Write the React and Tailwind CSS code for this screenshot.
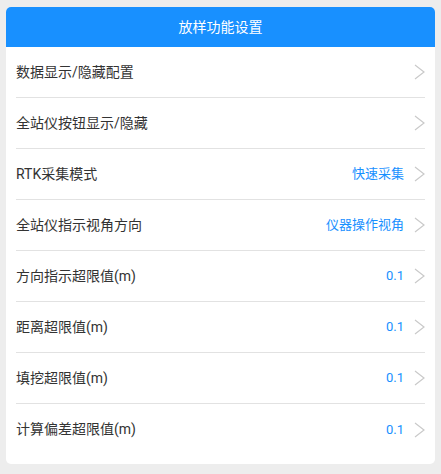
import React from "react";

const rows = [
  { label: "数据显示/隐藏配置" },
  { label: "全站仪按钮显示/隐藏" },
  { label: "RTK采集模式", value: "快速采集" },
  { label: "全站仪指示视角方向", value: "仪器操作视角" },
  { label: "方向指示超限值(m)", value: "0.1" },
  { label: "距离超限值(m)", value: "0.1" },
  { label: "填挖超限值(m)", value: "0.1" },
  { label: "计算偏差超限值(m)", value: "0.1" },
];

function Chevron() {
  return (
    <svg width="11" height="16" viewBox="0 0 11 16" className="shrink-0">
      <polyline points="1,1 10,8 1,15" fill="none" stroke="#cacaca" strokeWidth="1.2" />
    </svg>
  );
}

export default function App() {
  return (
    <div
      className="w-[441px] h-[474px] bg-[#ededed] pt-[7px] px-[6px]"
      style={{ fontFamily: 'Roboto, "Noto Sans CJK SC", sans-serif' }}
    >
      <div className="bg-white rounded-[5px] overflow-hidden pb-[9px]">
        <div className="h-[40px] bg-[#1890ff] flex items-center justify-center text-white text-[14px]">
          放样功能设置
        </div>
        <div className="px-[10px]">
          {rows.map((r, i) => (
            <div
              key={i}
              className={`h-[51px] flex items-center ${i < rows.length - 1 ? "border-b border-[#e2e2e2]" : ""}`}
            >
              <div className="flex-1 text-[14px] text-[#333333]">{r.label}</div>
              {r.value && <div className="text-[13px] text-[#1890ff] mr-[10px]">{r.value}</div>}
              <Chevron />
            </div>
          ))}
        </div>
      </div>
    </div>
  );
}
